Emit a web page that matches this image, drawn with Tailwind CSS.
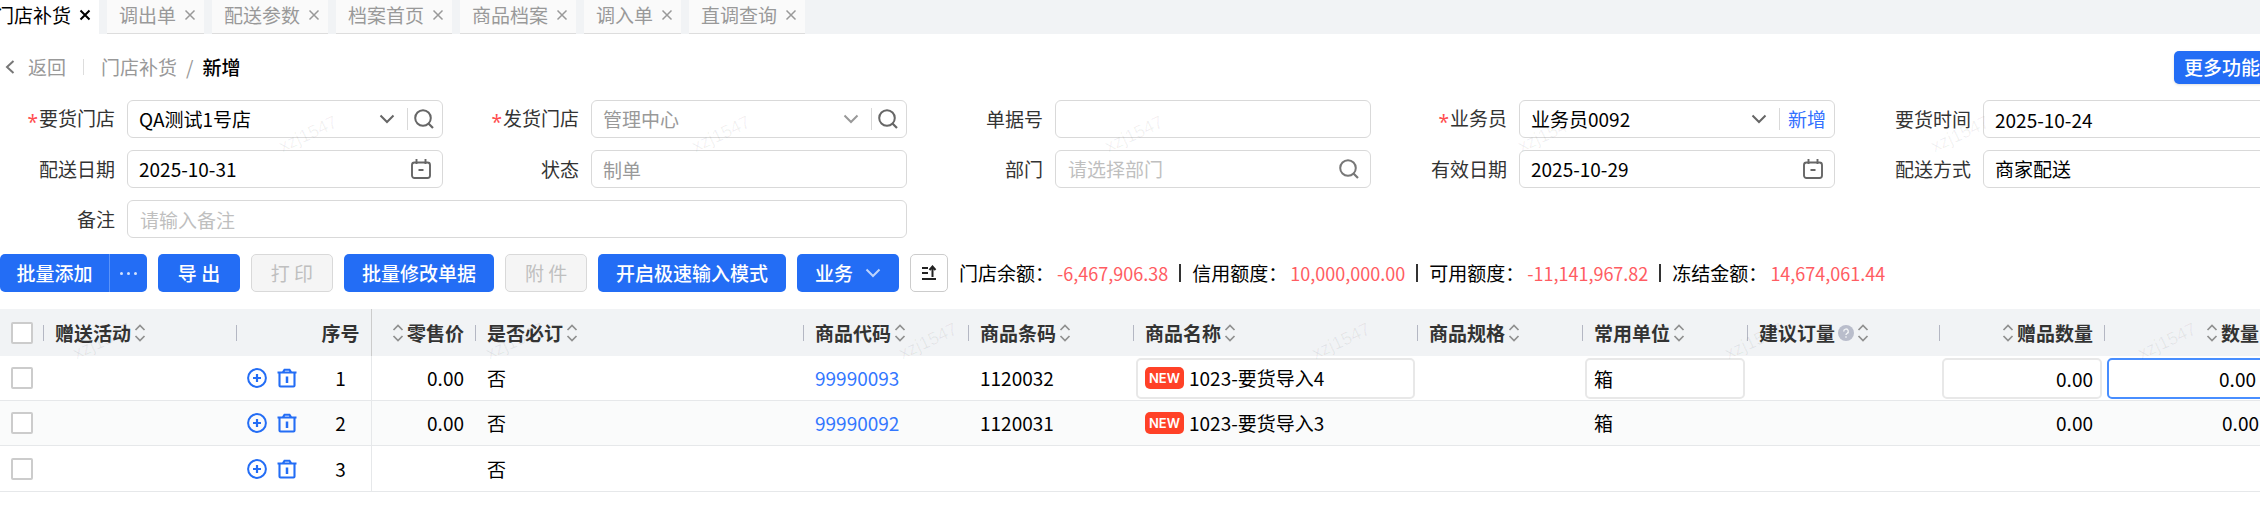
<!DOCTYPE html>
<html lang="zh-CN">
  <head>
    <meta charset="UTF-8" />
    <meta name="viewport" content="width=device-width, initial-scale=1.0" />
    <title>门店补货 - 新增</title>
    <script src="https://cdn.jsdelivr.net/npm/@tailwindcss/browser@4"></script>
  </head>
  <body class="relative min-h-screen overflow-x-hidden bg-white font-['Noto_Sans_CJK_SC',sans-serif] text-[19px] leading-6 text-[#222]">
    <!-- icons -->
    <svg class="hidden">
      <symbol id="i-close" viewBox="0 0 12 12"><path d="M1.5 1.5l9 9M10.5 1.5l-9 9" fill="none" stroke="currentColor" /></symbol>
      <symbol id="i-down" viewBox="0 0 16 10"><path d="M1.5 1.5L8 8l6.500-6.500" fill="none" stroke="currentColor" stroke-width="2" /></symbol>
      <symbol id="i-search" viewBox="0 0 20 20"><circle cx="9" cy="9" r="7.800" fill="none" stroke="currentColor" stroke-width="2" /><path d="M14.500 14.500l4.500 4.500" stroke="currentColor" stroke-width="2.200" /></symbol>
      <symbol id="i-date" viewBox="0 0 20 20"><rect x="1" y="3.500" width="18" height="15.500" rx="2.500" fill="none" stroke="currentColor" stroke-width="1.900" /><path d="M5.500 0v5M14.500 0v5M7.500 11h5" stroke="currentColor" stroke-width="1.900" /></symbol>
      <symbol id="i-sort" viewBox="0 0 12 18"><path d="M1.500 6L6 1.500 10.500 6M1.500 12L6 16.500 10.500 12" fill="none" stroke="#8f8f8f" stroke-width="1.700" /></symbol>
      <symbol id="i-plus" viewBox="0 0 20 20"><circle cx="10" cy="10" r="8.900" fill="none" stroke="currentColor" stroke-width="2" /><path d="M10 6v8M6 10h8" stroke="currentColor" stroke-width="2.200" /></symbol>
      <symbol id="i-trash" viewBox="0 0 20 20"><path d="M.5 4.500h19M2.500 4.500V17.500a1 1 0 0 0 1 1h13a1 1 0 0 0 1-1V4.500M6 4L7.500 1.800h5L14 4" fill="none" stroke="currentColor" stroke-width="2.100" /><path d="M10 8.500v6.500" stroke="currentColor" stroke-width="2.500" /></symbol>
      <symbol id="i-help" viewBox="0 0 16 16"><circle cx="8" cy="8" r="8" fill="#b9bdcb" /><path d="M5.700 6.400a2.300 2.300 0 1 1 3.400 2c-.8.400-1.100.8-1.100 1.500M8 11.300v1.400" fill="none" stroke="#f1f3f5" stroke-width="1.400" /></symbol>
    </svg>

    <!-- page tabs -->
    <nav class="flex h-[34px] gap-2 overflow-hidden whitespace-nowrap bg-[#f1f3f5] text-[#999]">
      <div class="-ml-[17px] flex items-center gap-2 bg-white pr-2 pb-1 pl-3 text-black"><a href="#">门店补货</a><button aria-label="关闭"><svg class="size-3 stroke-2"><use href="#i-close" /></svg></button></div>
      <div class="flex items-center gap-2 border-b border-[#ddd] bg-[#fafafa] pr-2 pb-1 pl-3"><a href="#">调出单</a><button aria-label="关闭"><svg class="size-3 stroke-[1.5px]"><use href="#i-close" /></svg></button></div>
      <div class="flex items-center gap-2 border-b border-[#ddd] bg-[#fafafa] pr-2 pb-1 pl-3"><a href="#">配送参数</a><button aria-label="关闭"><svg class="size-3 stroke-[1.5px]"><use href="#i-close" /></svg></button></div>
      <div class="flex items-center gap-2 border-b border-[#ddd] bg-[#fafafa] pr-2 pb-1 pl-3"><a href="#">档案首页</a><button aria-label="关闭"><svg class="size-3 stroke-[1.5px]"><use href="#i-close" /></svg></button></div>
      <div class="flex items-center gap-2 border-b border-[#ddd] bg-[#fafafa] pr-2 pb-1 pl-3"><a href="#">商品档案</a><button aria-label="关闭"><svg class="size-3 stroke-[1.5px]"><use href="#i-close" /></svg></button></div>
      <div class="flex items-center gap-2 border-b border-[#ddd] bg-[#fafafa] pr-2 pb-1 pl-3"><a href="#">调入单</a><button aria-label="关闭"><svg class="size-3 stroke-[1.5px]"><use href="#i-close" /></svg></button></div>
      <div class="flex items-center gap-2 border-b border-[#ddd] bg-[#fafafa] pr-2 pb-1 pl-3"><a href="#">直调查询</a><button aria-label="关闭"><svg class="size-3 stroke-[1.5px]"><use href="#i-close" /></svg></button></div>
    </nav>

    <!-- breadcrumb -->
    <header class="-mr-[10px] flex h-[66px] items-center text-[#999]">
      <a href="#" class="flex items-center gap-3 pl-1">
        <svg class="h-4 w-3" viewBox="0 0 12 16" fill="none" stroke="#777" stroke-width="2"><path d="M9.500 2L3 8l6.500 6" /></svg>
        返回
      </a>
      <span class="mx-[17px] h-4 w-px bg-[#ddd]"></span>
      <a href="#">门店补货</a>
      <span class="mx-[9px]">/</span>
      <span class="font-medium text-black">新增</span>
      <button class="ml-auto h-[33px] rounded-[5px] bg-[#236df5] px-[10px] font-medium text-white shadow-sm">更多功能</button>
    </header>

    <!-- order form -->
    <form class="-mr-15 grid grid-cols-5 gap-y-3">
      <div class="flex h-[38px] items-center">
        <label for="store" class="w-[115px] text-right text-[#333]"><span class="mr-px inline-block align-[-3px] font-['Noto_Sans',sans-serif] leading-none text-[#ff4d4f]">*</span>要货门店</label>
        <div class="mr-[21px] ml-3 flex h-full min-w-0 flex-1 items-center rounded-md border border-[#d9d9d9] pr-2 pl-[11px]">
          <select id="store" class="min-w-0 flex-1 appearance-none text-black"><option>QA测试1号店</option></select>
          <svg class="h-[10px] w-4 text-[#666]"><use href="#i-down" /></svg>
          <span class="mr-[6px] ml-3 h-[22px] w-px bg-[#d9d9d9]"></span>
          <button type="button" aria-label="搜索"><svg class="size-5 text-[#666]"><use href="#i-search" /></svg></button>
        </div>
      </div>
      <div class="flex h-[38px] items-center">
        <label for="sender" class="w-[115px] text-right text-[#333]"><span class="mr-px inline-block align-[-3px] font-['Noto_Sans',sans-serif] leading-none text-[#ff4d4f]">*</span>发货门店</label>
        <div class="mr-[21px] ml-3 flex h-full min-w-0 flex-1 items-center rounded-md border border-[#d9d9d9] pr-2 pl-[11px]">
          <select id="sender" class="min-w-0 flex-1 appearance-none text-[#999]"><option>管理中心</option></select>
          <svg class="h-[10px] w-4 text-[#999]"><use href="#i-down" /></svg>
          <span class="mr-[6px] ml-3 h-[22px] w-px bg-[#d9d9d9]"></span>
          <button type="button" aria-label="搜索"><svg class="size-5 text-[#666]"><use href="#i-search" /></svg></button>
        </div>
      </div>
      <div class="flex h-[38px] items-center">
        <label for="bill" class="w-[115px] text-right text-[#333]">单据号</label>
        <input id="bill" class="mr-[21px] ml-3 h-full min-w-0 flex-1 rounded-md border border-[#d9d9d9] px-[11px]" />
      </div>
      <div class="flex h-[38px] items-center">
        <label for="clerk" class="w-[115px] text-right text-[#333]"><span class="mr-px inline-block align-[-3px] font-['Noto_Sans',sans-serif] leading-none text-[#ff4d4f]">*</span>业务员</label>
        <div class="mr-[21px] ml-3 flex h-full min-w-0 flex-1 items-center rounded-md border border-[#d9d9d9] pr-2 pl-[11px]">
          <select id="clerk" class="min-w-0 flex-1 appearance-none text-black"><option>业务员0092</option></select>
          <svg class="h-[10px] w-4 text-[#666]"><use href="#i-down" /></svg>
          <span class="mr-2 ml-3 h-[22px] w-px bg-[#d9d9d9]"></span>
          <a href="#" class="text-[#3370ff]">新增</a>
        </div>
      </div>
      <div class="flex h-[38px] items-center">
        <label for="need" class="w-[115px] text-right text-[#333]">要货时间</label>
        <input id="need" value="2025-10-24" class="mr-[21px] ml-3 h-full min-w-0 flex-1 rounded-md border border-[#d9d9d9] px-[11px] text-black" />
      </div>

      <div class="flex h-[38px] items-center">
        <label for="ship" class="w-[115px] text-right text-[#333]">配送日期</label>
        <div class="mr-[21px] ml-3 flex h-full min-w-0 flex-1 items-center rounded-md border border-[#d9d9d9] pr-[11px] pl-[11px]">
          <input id="ship" value="2025-10-31" class="min-w-0 flex-1 text-black" />
          <svg class="size-5 text-[#666]"><use href="#i-date" /></svg>
        </div>
      </div>
      <div class="flex h-[38px] items-center">
        <label for="state" class="w-[115px] text-right text-[#333]">状态</label>
        <input id="state" value="制单" readonly class="mr-[21px] ml-3 h-full min-w-0 flex-1 rounded-md border border-[#d9d9d9] px-[11px] text-[#999]" />
      </div>
      <div class="flex h-[38px] items-center">
        <label for="dept" class="w-[115px] text-right text-[#333]">部门</label>
        <div class="mr-[21px] ml-3 flex h-full min-w-0 flex-1 items-center rounded-md border border-[#d9d9d9] pr-[11px] pl-3">
          <input id="dept" placeholder="请选择部门" class="min-w-0 flex-1 placeholder:text-[#bfbfbf]" />
          <button type="button" aria-label="搜索"><svg class="size-5 text-[#777]"><use href="#i-search" /></svg></button>
        </div>
      </div>
      <div class="flex h-[38px] items-center">
        <label for="valid" class="w-[115px] text-right text-[#333]">有效日期</label>
        <div class="mr-[21px] ml-3 flex h-full min-w-0 flex-1 items-center rounded-md border border-[#d9d9d9] pr-[11px] pl-[11px]">
          <input id="valid" value="2025-10-29" class="min-w-0 flex-1 text-black" />
          <svg class="size-5 text-[#666]"><use href="#i-date" /></svg>
        </div>
      </div>
      <div class="flex h-[38px] items-center">
        <label for="way" class="w-[115px] text-right text-[#333]">配送方式</label>
        <select id="way" class="mr-[21px] ml-3 h-full min-w-0 flex-1 appearance-none rounded-md border border-[#d9d9d9] px-[11px] text-black"><option>商家配送</option></select>
      </div>

      <div class="col-span-2 flex h-[38px] items-center">
        <label for="remark" class="w-[115px] text-right text-[#333]">备注</label>
        <input id="remark" placeholder="请输入备注" class="mr-[21px] ml-3 h-full min-w-0 flex-1 rounded-md border border-[#d9d9d9] px-3 placeholder:text-[#bfbfbf]" />
      </div>
    </form>

    <!-- toolbar -->
    <div class="mt-4 mb-[17px] flex h-[38px] gap-[11px] whitespace-nowrap font-medium text-white">
      <div class="flex">
        <button class="w-[109px] rounded-l-[5px] bg-[#236df5]">批量添加</button>
        <button class="flex w-[38px] items-center justify-center gap-1 rounded-r-[5px] border-l border-[#5a93f9] bg-[#236df5]" aria-label="更多">
          <span class="size-[3px] rounded-full bg-white/80"></span><span class="size-[3px] rounded-full bg-white/80"></span><span class="size-[3px] rounded-full bg-white/80"></span>
        </button>
      </div>
      <button class="w-[82px] rounded-[5px] bg-[#236df5]">导 出</button>
      <button disabled class="w-[82px] rounded-[5px] border border-[#d9d9d9] bg-[#f5f5f5] font-normal text-[#bfbfbf]">打 印</button>
      <button class="rounded-[5px] bg-[#236df5] px-[18px]">批量修改单据</button>
      <button disabled class="w-[82px] rounded-[5px] border border-[#d9d9d9] bg-[#f5f5f5] font-normal text-[#bfbfbf]">附 件</button>
      <button class="rounded-[5px] bg-[#236df5] px-[18px]">开启极速输入模式</button>
      <button class="flex items-center gap-3 rounded-[5px] bg-[#236df5] px-[18px]">业务<svg class="h-[10px] w-4 text-white/70"><use href="#i-down" /></svg></button>
      <button class="flex w-[38px] items-center justify-center rounded-[5px] border border-[#ccc] bg-white" aria-label="排序">
        <svg class="size-4" viewBox="0 0 16 16" fill="none" stroke="#222" stroke-width="2"><path d="M1 3h6M1 8h6M1 14h14M11.500 12V2M8.500 5l3-3.500 3 3.500" /></svg>
      </button>
      <div class="flex items-center font-normal text-black">
        <span>门店余额：</span><span class="ml-[3px] text-lg text-[#ff5c62]">-6,467,906.38</span><span class="mx-[11px] h-[18px] w-[2px] bg-[#333]"></span>
        <span>信用额度：</span><span class="ml-[3px] text-lg text-[#ff5c62]">10,000,000.00</span><span class="mx-[11px] h-[18px] w-[2px] bg-[#333]"></span>
        <span>可用额度：</span><span class="ml-[3px] text-lg text-[#ff5c62]">-11,141,967.82</span><span class="mx-[11px] h-[18px] w-[2px] bg-[#333]"></span>
        <span>冻结金额：</span><span class="ml-[3px] text-lg text-[#ff5c62]">14,674,061.44</span>
      </div>
    </div>

    <!-- goods -->
    <div class="-mr-[10px]">
      <table class="w-full table-fixed border-separate border-spacing-0 whitespace-nowrap">
        <colgroup>
          <col class="w-[43px]" /><col class="w-[193px]" /><col class="w-[74px]" /><col class="w-[62px]" /><col class="w-[103px]" /><col class="w-[328px]" /><col class="w-[165px]" /><col class="w-[165px]" /><col class="w-[284px]" /><col class="w-[165px]" /><col class="w-[165px]" /><col class="w-[192px]" /><col class="w-[165px]" /><col />
        </colgroup>
        <thead class="bg-[#f1f3f5] text-left text-[#333]">
          <tr class="h-[47px]">
            <th class="pl-[11px]"><input type="checkbox" aria-label="全选" class="block size-[22px] appearance-none rounded-[2px] border-2 border-[#ccc] bg-white" /></th>
            <th><div class="flex h-4 items-center gap-[3px] border-l border-[#b4b7c3] pl-[11px]">赠送活动<svg class="h-[18px] w-3"><use href="#i-sort" /></svg></div></th>
            <th><div class="h-4 border-l border-[#b4b7c3]"></div></th>
            <th class="border-r border-[#ccc] text-center">序号</th>
            <th><div class="flex h-4 items-center justify-end gap-[3px] pr-[11px]"><svg class="h-[18px] w-3"><use href="#i-sort" /></svg>零售价</div></th>
            <th><div class="flex h-4 items-center gap-[3px] border-l border-[#b4b7c3] pl-[11px]">是否必订<svg class="h-[18px] w-3"><use href="#i-sort" /></svg></div></th>
            <th><div class="flex h-4 items-center gap-[3px] border-l border-[#b4b7c3] pl-[11px]">商品代码<svg class="h-[18px] w-3"><use href="#i-sort" /></svg></div></th>
            <th><div class="flex h-4 items-center gap-[3px] border-l border-[#b4b7c3] pl-[11px]">商品条码<svg class="h-[18px] w-3"><use href="#i-sort" /></svg></div></th>
            <th><div class="flex h-4 items-center gap-[3px] border-l border-[#b4b7c3] pl-[11px]">商品名称<svg class="h-[18px] w-3"><use href="#i-sort" /></svg></div></th>
            <th><div class="flex h-4 items-center gap-[3px] border-l border-[#b4b7c3] pl-[11px]">商品规格<svg class="h-[18px] w-3"><use href="#i-sort" /></svg></div></th>
            <th><div class="flex h-4 items-center gap-[3px] border-l border-[#b4b7c3] pl-[11px]">常用单位<svg class="h-[18px] w-3"><use href="#i-sort" /></svg></div></th>
            <th><div class="flex h-4 items-center gap-[3px] border-l border-[#b4b7c3] pl-[11px]">建议订量<svg class="size-4"><use href="#i-help" /></svg><svg class="h-[18px] w-3"><use href="#i-sort" /></svg></div></th>
            <th><div class="flex h-4 items-center justify-end gap-[3px] border-l border-[#b4b7c3] pr-[11px]"><svg class="h-[18px] w-3"><use href="#i-sort" /></svg>赠品数量</div></th>
            <th><div class="flex h-4 items-center justify-end gap-[3px] border-l border-[#b4b7c3] pr-[11px]"><svg class="h-[18px] w-3"><use href="#i-sort" /></svg>数量</div></th>
          </tr>
        </thead>
        <tbody class="text-black [&_td]:border-b [&_td]:border-[#e6e8ea]">
          <tr class="h-[45px]">
            <td class="pl-[11px]"><input type="checkbox" aria-label="选择第1行" class="block size-[22px] appearance-none rounded-[2px] border-2 border-[#ccc] bg-white" /></td>
            <td></td>
            <td><div class="flex gap-[10px] pl-[11px] text-[#236df5]"><button aria-label="添加"><svg class="size-5"><use href="#i-plus" /></svg></button><button aria-label="删除"><svg class="size-5"><use href="#i-trash" /></svg></button></div></td>
            <td class="border-r text-center">1</td>
            <td class="pr-[11px] text-right">0.00</td>
            <td class="pl-3">否</td>
            <td class="pl-3"><a href="#" class="text-[#3377ff]">99990093</a></td>
            <td class="pl-3">1120032</td>
            <td class="pr-[2px] pl-[3px]"><div class="flex h-[41px] items-center gap-[5px] rounded-[5px] border-2 border-[#e8e8e8] bg-white pl-[7px]"><span class="flex h-[22px] w-[39px] items-center justify-center rounded-[5px] bg-[#ff4127] font-[Inter,sans-serif] text-[13px] font-semibold text-white">NEW</span><input value="1023-要货导入4" aria-label="商品名称" class="min-w-0 flex-1" /></div></td>
            <td></td>
            <td class="pr-[2px] pl-[3px]"><input value="箱" aria-label="常用单位" class="block h-[41px] w-full rounded-[5px] border-2 border-[#e8e8e8] bg-white px-[7px]" /></td>
            <td></td>
            <td class="pr-[2px] pl-[3px]"><input value="0.00" aria-label="赠品数量" class="block h-[41px] w-full rounded-[5px] border-2 border-[#e8e8e8] bg-white px-[7px] text-right" /></td>
            <td class="pr-[2px] pl-[3px]"><input value="0.00" aria-label="数量" class="block h-[41px] w-full rounded-[5px] border-2 border-[#488eff] bg-white px-[10px] text-right" /></td>
          </tr>
          <tr class="h-[45px] bg-[#fafbfb]">
            <td class="pl-[11px]"><input type="checkbox" aria-label="选择第2行" class="block size-[22px] appearance-none rounded-[2px] border-2 border-[#ccc] bg-white" /></td>
            <td></td>
            <td><div class="flex gap-[10px] pl-[11px] text-[#236df5]"><button aria-label="添加"><svg class="size-5"><use href="#i-plus" /></svg></button><button aria-label="删除"><svg class="size-5"><use href="#i-trash" /></svg></button></div></td>
            <td class="border-r text-center">2</td>
            <td class="pr-[11px] text-right">0.00</td>
            <td class="pl-3">否</td>
            <td class="pl-3"><a href="#" class="text-[#3377ff]">99990092</a></td>
            <td class="pl-3">1120031</td>
            <td class="pl-3"><div class="flex items-center gap-[5px]"><span class="flex h-[22px] w-[39px] items-center justify-center rounded-[5px] bg-[#ff4127] font-[Inter,sans-serif] text-[13px] font-semibold text-white">NEW</span>1023-要货导入3</div></td>
            <td></td>
            <td class="pl-3">箱</td>
            <td></td>
            <td class="pr-[11px] text-right">0.00</td>
            <td class="pr-[11px] text-right">0.00</td>
          </tr>
          <tr class="h-[46px]">
            <td class="pl-[11px]"><input type="checkbox" aria-label="选择第3行" class="block size-[22px] appearance-none rounded-[2px] border-2 border-[#ccc] bg-white" /></td>
            <td></td>
            <td><div class="flex gap-[10px] pl-[11px] text-[#236df5]"><button aria-label="添加"><svg class="size-5"><use href="#i-plus" /></svg></button><button aria-label="删除"><svg class="size-5"><use href="#i-trash" /></svg></button></div></td>
            <td class="border-r text-center">3</td>
            <td></td>
            <td class="pl-3">否</td>
            <td></td><td></td><td></td><td></td><td></td><td></td><td></td><td></td>
          </tr>
        </tbody>
      </table>
    </div>

    <!-- user watermark -->
    <div id="watermark" class="pointer-events-none absolute inset-0 overflow-hidden" aria-hidden="true"></div>

    <script>
      const layer = document.getElementById("watermark");
      for (const [startX, y] of [[277, 122], [71, 329]]) {
        for (let x = startX; x < 2260; x += 413) {
          const mark = document.createElement("span");
          mark.textContent = "xzj1547";
          mark.className = "absolute -rotate-25 font-['Liberation_Sans',sans-serif] text-lg leading-6 text-black/6";
          mark.style.left = `${x}px`;
          mark.style.top = `${y}px`;
          layer.appendChild(mark);
        }
      }
    </script>
  </body>
</html>
